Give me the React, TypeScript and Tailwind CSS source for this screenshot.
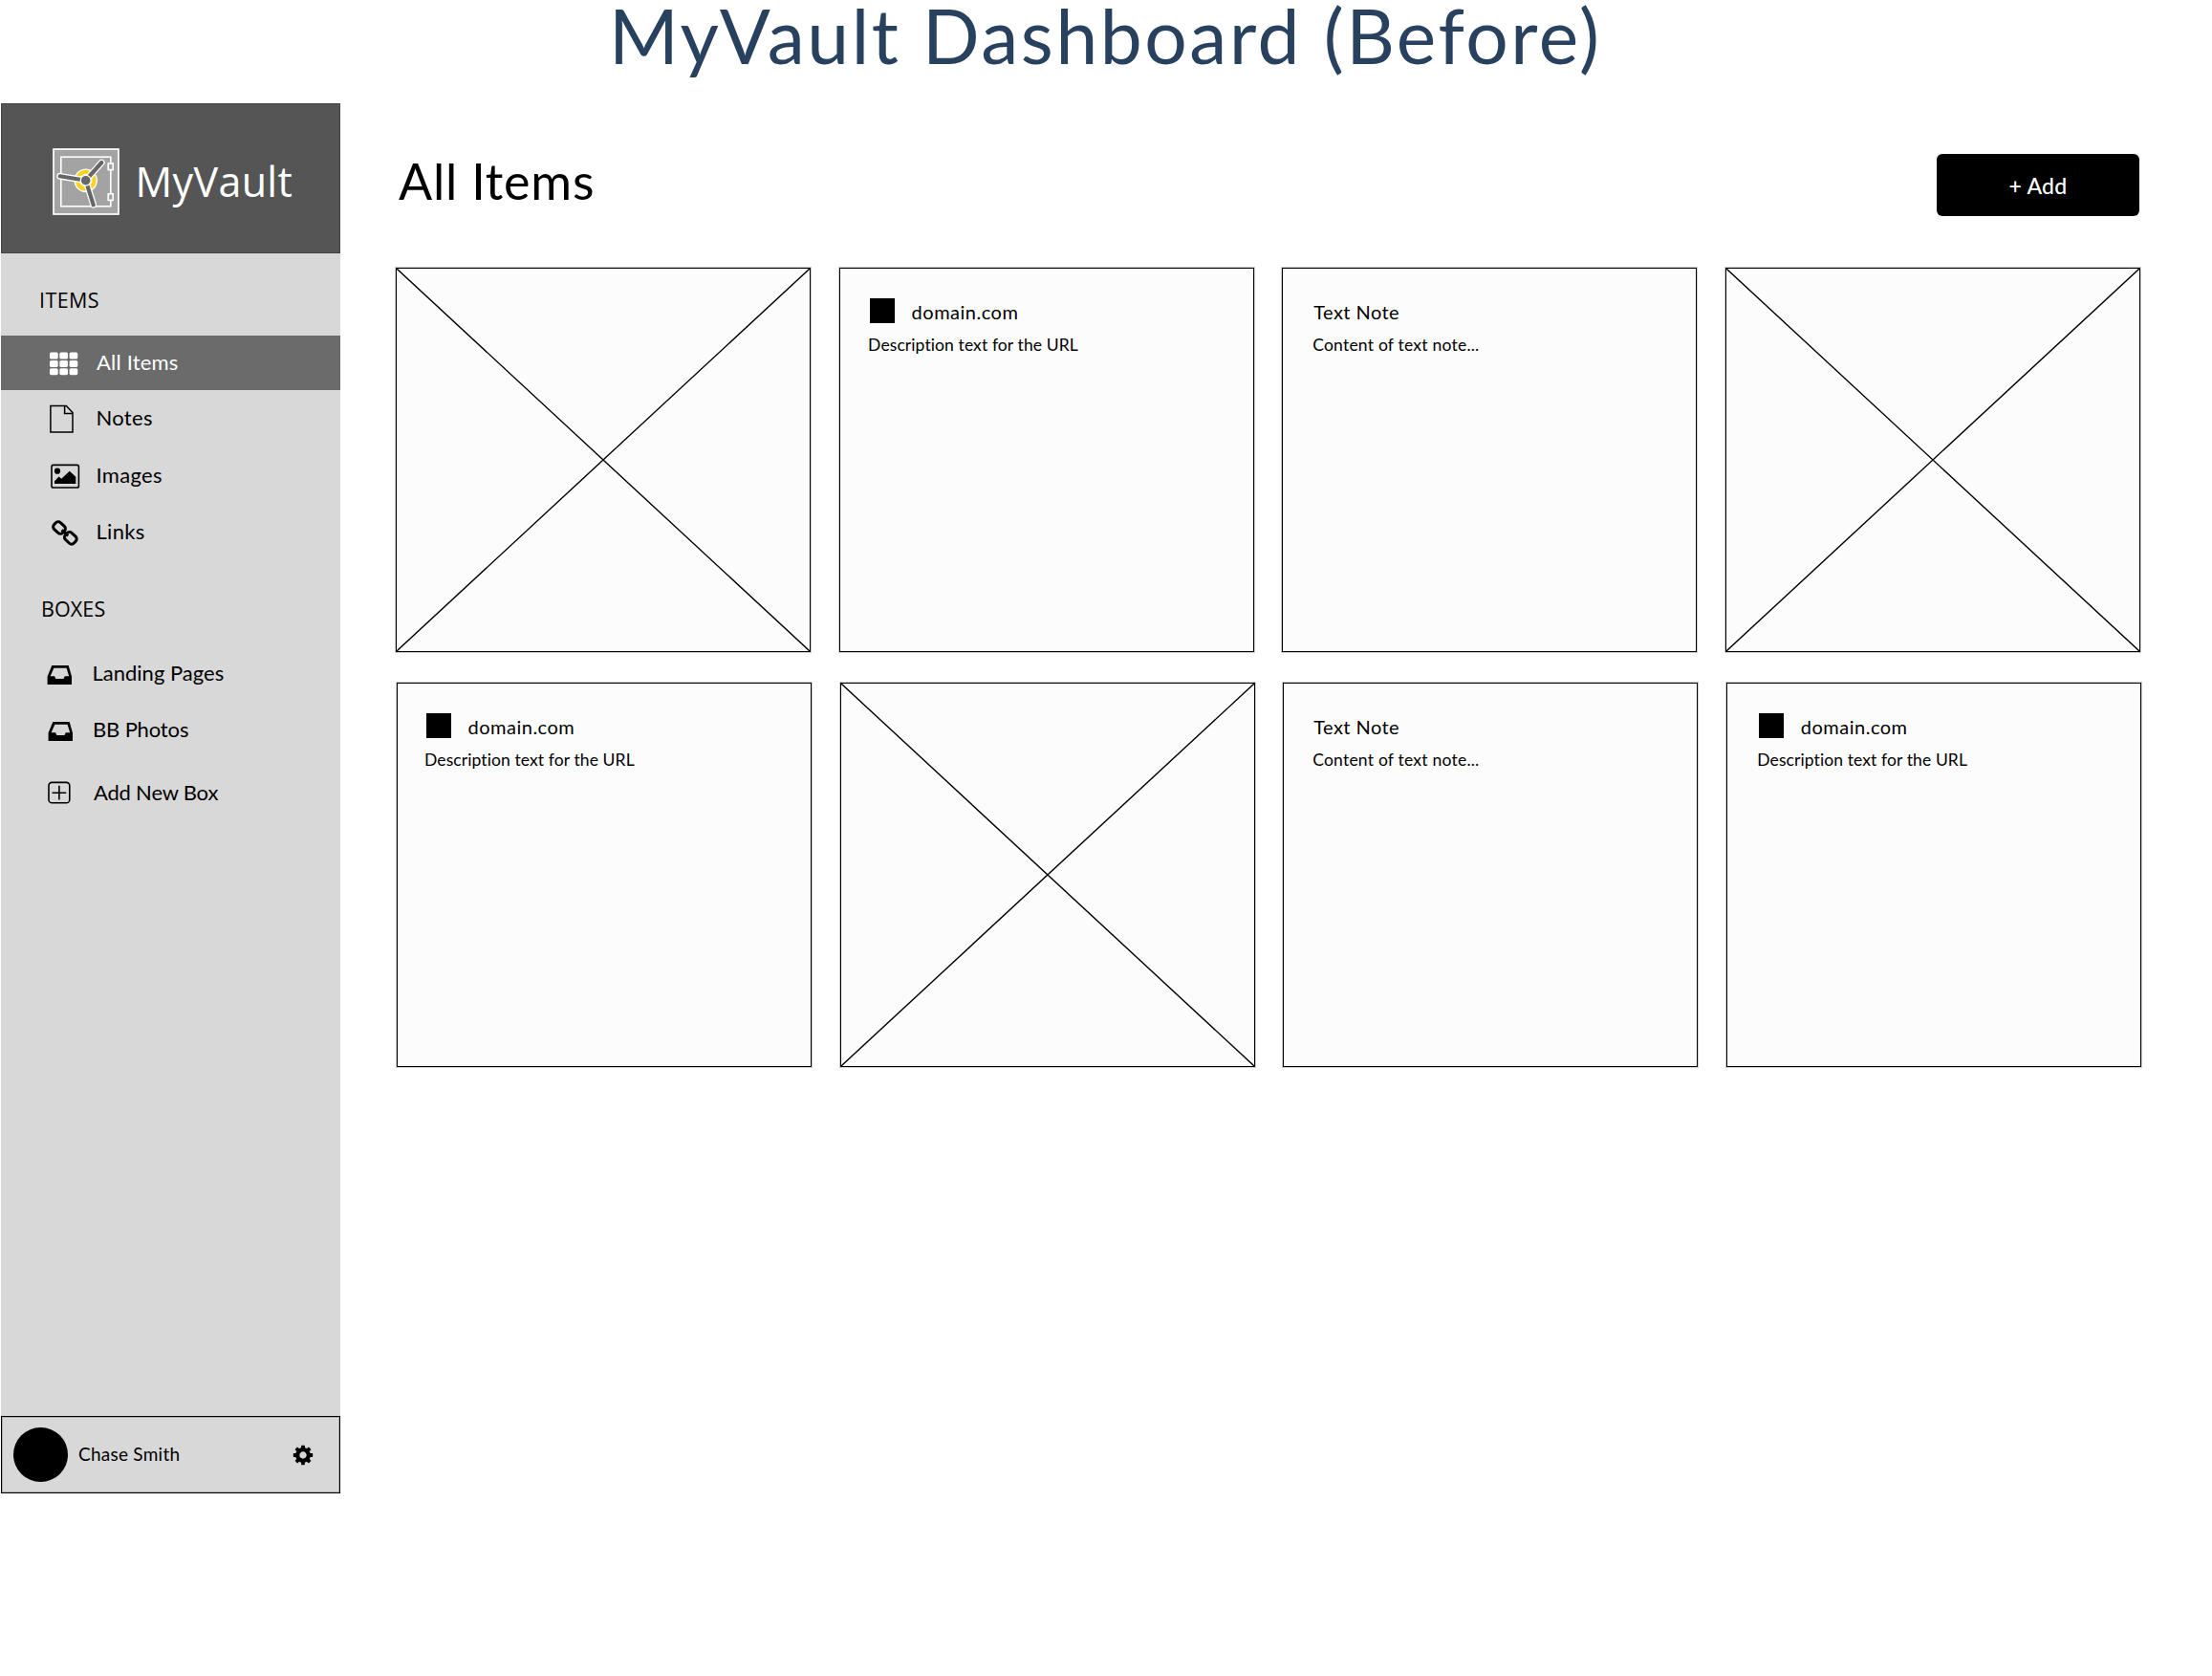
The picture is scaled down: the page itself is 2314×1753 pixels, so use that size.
import type { ReactNode } from "react";

function VaultLogo() {
  const arms = ["M34.7 33.7L7.7 29.3", "M34.7 33.7L51.3 15", "M34.7 33.7L42.7 59.3"];
  return (
    <svg width="70" height="70" viewBox="0 0 70 70" fill="none" className="shrink-0">
      <rect x="1" y="1" width="68" height="68" fill="#a3a3a3" stroke="#fff" strokeWidth="1.7" />
      <rect x="8.8" y="9.2" width="52" height="51.6" stroke="#fff" strokeWidth="1.6" />
      <rect x="58.2" y="16" width="5" height="6.6" fill="#a3a3a3" stroke="#fff" strokeWidth="1.6" />
      <rect x="58.2" y="47.8" width="5" height="6.6" fill="#a3a3a3" stroke="#fff" strokeWidth="1.6" />
      <circle cx="34.7" cy="33.7" r="11.6" fill="#ffd31c" stroke="#fff" strokeWidth="1.4" />
      <circle cx="34.7" cy="33.7" r="6.4" fill="#a3a3a3" stroke="#fff" strokeWidth="1" />
      {arms.map((d) => (
        <path key={d} d={d} stroke="#fff" strokeWidth="6.8" strokeLinecap="round" />
      ))}
      {arms.map((d) => (
        <path key={d} d={d} stroke="#666" strokeWidth="4.2" strokeLinecap="round" />
      ))}
      <circle cx="34.7" cy="33.7" r="5.4" fill="#666" stroke="#fff" strokeWidth="1.3" />
    </svg>
  );
}

function Icon({ children }: { children: ReactNode }) {
  return (
    <svg width="40" height="40" viewBox="0 0 40 40" fill="none" className="ml-[47px] shrink-0">
      {children}
    </svg>
  );
}

function GridIcon() {
  return (
    <Icon>
      {[8.6, 16.9, 25.2].map((y) =>
        [4, 14.3, 24.6].map((x) => (
          <rect key={`${x}-${y}`} x={x} y={y} width="8.7" height="7" rx="1.6" fill="#fff" />
        )),
      )}
    </Icon>
  );
}

function NoteIcon() {
  return (
    <Icon>
      <path d="M4.9 8.4H21.3L28 15.5V36H4.9Z M19.6 8.4V16.4H28" stroke="#000" strokeWidth="1.5" />
    </Icon>
  );
}

function ImageIcon() {
  return (
    <Icon>
      <rect x="6" y="10.4" width="28.4" height="23.6" rx="1.8" stroke="#000" strokeWidth="1.6" />
      <circle cx="12" cy="16.7" r="3.1" fill="#000" />
      <path d="M9 30V27.2L13.6 22.4L16.2 24.8L24.8 16.8L31.3 22.8V30Z" fill="#000" />
    </Icon>
  );
}

function LinkIcon() {
  return (
    <Icon>
      <g transform="translate(19.9 22.4) rotate(42.5)" stroke="#000" strokeWidth="3">
        <rect x="-14.2" y="-4.8" width="12.4" height="9.6" rx="3.4" />
        <rect x="1.8" y="-4.8" width="12.4" height="9.6" rx="3.4" />
        <path d="M-4.5 0H4.5" />
      </g>
    </Icon>
  );
}

function InboxIcon() {
  return (
    <Icon>
      <path
        fillRule="evenodd"
        d="M6.3 13H23.7L27 24.6V33H1.6V24.6Z M8.4 15.8L4.6 24.2H9L10.4 27H18.4L19.8 24.2H24.2L21.6 15.8Z"
        fill="#000"
      />
    </Icon>
  );
}

function AddBoxIcon() {
  return (
    <Icon>
      <rect x="3" y="10.4" width="21.8" height="21.4" rx="3.4" stroke="#000" strokeWidth="1.6" />
      <path d="M6.6 21.2H21.2M13.9 13.8V28.6" stroke="#000" strokeWidth="1.6" />
    </Icon>
  );
}

function GearIcon() {
  return (
    <svg width="22" height="22" viewBox="-11 -11 22 22" fill="none">
      <circle r="5.8" stroke="#000" strokeWidth="4.2" />
      {[0, 45, 90, 135, 180, 225, 270, 315].map((a) => (
        <rect key={a} x="-1.9" y="-10.2" width="3.8" height="4" rx="0.6" fill="#000" transform={`rotate(${a})`} />
      ))}
    </svg>
  );
}

function Crossed() {
  return (
    <svg className="h-full w-full" viewBox="0 0 433 401" preserveAspectRatio="none">
      <path d="M0 0L433 401M433 0L0 401" stroke="#000" strokeWidth="1.4" />
    </svg>
  );
}

const cardBox = "h-[402px] w-[434px] border border-black bg-[#fcfcfc] shadow-[0_0_0_1px_rgba(0,0,0,0.2)]";

function PlaceholderCard() {
  return (
    <div className={cardBox}>
      <Crossed />
    </div>
  );
}

function LinkCard({ pad = "pl-[31px]" }: { pad?: string }) {
  return (
    <div className={`${cardBox} ${pad} pt-[31px]`}>
      <div className="flex h-[26px] items-center">
        <span className="h-[26px] w-[26px] bg-black" />
        <span className="ml-[18px] mt-[2px] text-[20px] leading-[26px] tracking-[0.5px]">domain.com</span>
      </div>
      <p className="-ml-[1.5px] mt-[11px] text-[17.5px] leading-[24px] tracking-[0.1px]">Description text for the URL</p>
    </div>
  );
}

function NoteCard({ pad = "pl-[32px]" }: { pad?: string }) {
  return (
    <div className={`${cardBox} ${pad} pt-[32px]`}>
      <div className="text-[20px] leading-[26px] tracking-[0.45px]">Text Note</div>
      <p className="-ml-px mt-[10px] text-[17.5px] leading-[24px] tracking-[0.22px]">Content of text note...</p>
    </div>
  );
}

export default function App() {
  return (
    <div className="h-[1753px] w-[2314px] bg-white font-['Lato',sans-serif] text-black">
      <h1 className="flex h-[108px] items-start pl-[637px] text-[78.5px] leading-[75px] tracking-[2.55px] whitespace-nowrap text-[#28415f]">
        MyVault Dashboard (Before)
      </h1>
      <div className="flex">
        <aside className="ml-px flex h-[1454px] w-[355px] shrink-0 flex-col bg-[#d8d8d8] text-[22px] whitespace-nowrap">
          <div className="flex h-[157px] items-center border border-[#444] bg-[#555] pl-[53px] pt-[7px]">
            <VaultLogo />
            <span className="ml-[16.5px] font-['Open_Sans',sans-serif] text-[43px] leading-[60px] tracking-[0.35px] text-white">MyVault</span>
          </div>
          <div className="h-[86px] pt-[33px] pl-[40px] font-['Open_Sans',sans-serif] text-[21.5px] leading-[32px] tracking-[0.4px]">
            ITEMS
          </div>
          <nav>
            <div className="flex h-[57px] items-center bg-[#6b6b6b] text-white">
              <GridIcon />
              <span className="ml-[13px] -mt-[2px] tracking-[0.2px]">All Items</span>
            </div>
            <div className="flex h-[56px] items-center">
              <NoteIcon />
              <span className="ml-[12.5px] tracking-[0.3px]">Notes</span>
            </div>
            <div className="flex h-[64px] items-center">
              <ImageIcon />
              <span className="ml-[12.5px] tracking-[0.3px]">Images</span>
            </div>
            <div className="flex h-[54px] items-center">
              <LinkIcon />
              <span className="ml-[12.5px] tracking-[0.3px]">Links</span>
            </div>
          </nav>
          <div className="h-[91px] pt-[39px] pl-[42px] font-['Open_Sans',sans-serif] text-[21.5px] leading-[32px] tracking-[0.1px]">BOXES</div>
          <div className="flex h-[60px] items-center">
            <InboxIcon />
            <span className="ml-[8.5px]">Landing Pages</span>
          </div>
          <div className="flex h-[58px] items-center pl-px">
            <InboxIcon />
            <span className="ml-[8px] tracking-[-0.15px]">BB Photos</span>
          </div>
          <div className="mt-[7px] flex h-[60px] items-center">
            <AddBoxIcon />
            <span className="ml-[10px] tracking-[-0.2px]">Add New Box</span>
          </div>
          <div className="mt-auto flex h-[81px] items-center border border-black pl-[12px] shadow-[inset_0_0_0_1px_rgba(0,0,0,0.2)]">
            <span className="h-[57px] w-[57px] rounded-full bg-black" />
            <span className="ml-[11px] text-[19px] tracking-[0.25px]">Chase Smith</span>
            <span className="mr-[27px] ml-auto">
              <GearIcon />
            </span>
          </div>
        </aside>
        <main className="pl-[58px]">
          <div className="flex h-[172px] w-[1824px] justify-between pt-[51px]">
            <h2 className="pl-[3px] text-[52px] leading-[60px] tracking-[0.8px]">All Items</h2>
            <button className="mt-[2px] h-[65px] w-[212px] rounded-[6px] bg-black text-[23px] leading-[62px] font-medium tracking-[0.3px] text-white">
              + Add
            </button>
          </div>
          <div className="grid grid-cols-[repeat(4,434px)] gap-x-[29.6px]">
            <PlaceholderCard />
            <LinkCard />
            <NoteCard />
            <PlaceholderCard />
          </div>
          <div className="mt-[32px] ml-px grid grid-cols-[repeat(4,434px)] gap-x-[29.6px]">
            <LinkCard pad="pl-[29.5px]" />
            <PlaceholderCard />
            <NoteCard pad="pl-[31px]" />
            <LinkCard pad="pl-[33px]" />
          </div>
        </main>
      </div>
    </div>
  );
}
